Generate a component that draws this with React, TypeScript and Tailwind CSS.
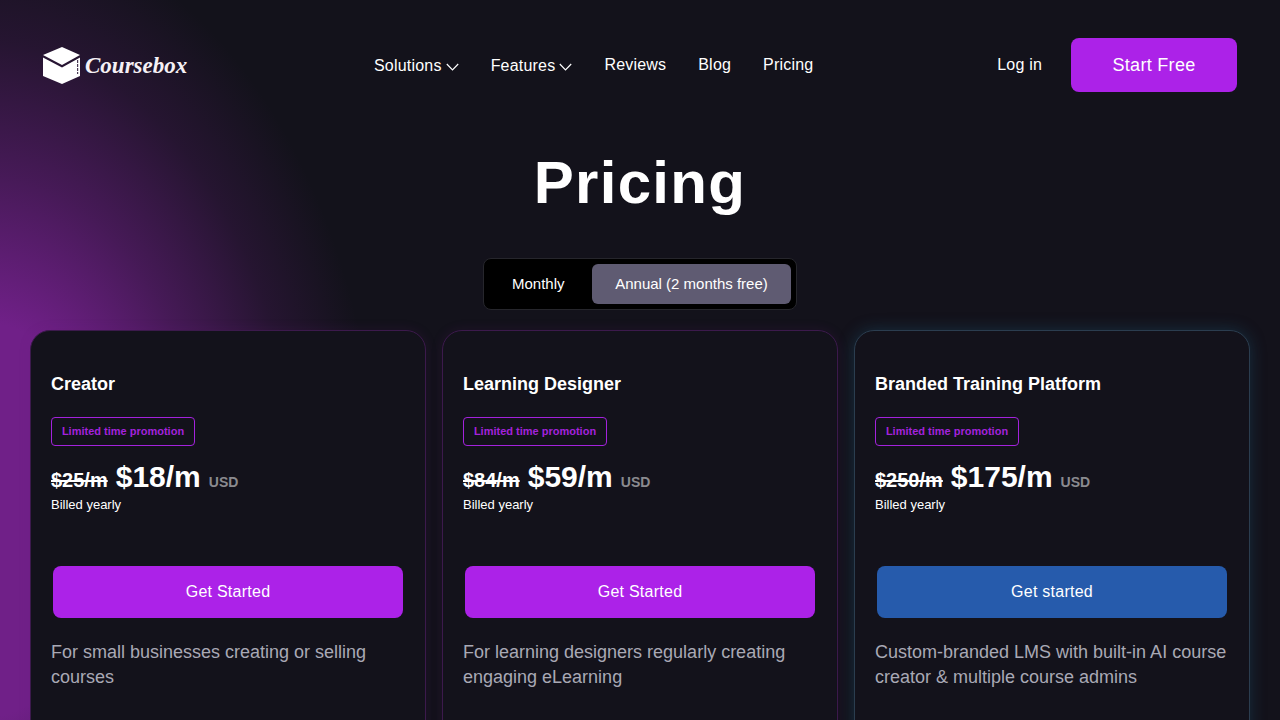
function Chevron() {
  return (
    <svg width="13" height="8" viewBox="0 0 13 8" fill="none" className="mt-[2px] shrink-0">
      <path d="M0.8 1 L6.5 6.8 L12.2 1" stroke="#fff" strokeWidth="1.2" />
    </svg>
  );
}

function Logo() {
  return (
    <div className="flex w-[146px] items-center">
      <svg width="40" height="39" viewBox="0 0 40 39" className="shrink-0">
        <path d="M20 1 L38 9 L20 19 L1 9 Z" fill="#fff" />
        <path d="M1 11.5 L20 21.5 L38 11.5 V30 L20 38 L1 30 Z" fill="#fff" />
        <path d="M35.6 14 V28" stroke="#4a3a55" strokeWidth="1.2" strokeDasharray="3 1" />
      </svg>
      <span className="ml-[3px] whitespace-nowrap text-[23px] leading-none font-bold italic text-[#f5f0f5] font-['Liberation_Serif',serif]">Coursebox</span>
    </div>
  );
}

function NavItem({ label, caret }: { label: string; caret?: boolean }) {
  return (
    <a className={`flex items-center gap-[4px] text-[16px] tracking-[0.2px] text-white ${caret ? "mt-[1px]" : ""}`}>
      {label}
      {caret && <Chevron />}
    </a>
  );
}

type Plan = {
  name: string;
  old: string;
  price: string;
  cta: string;
  desc: string;
  blue?: boolean;
};

const plans: Plan[] = [
  { name: "Creator", old: "$25/m", price: "$18/m", cta: "Get Started", desc: "For small businesses creating or selling courses" },
  { name: "Learning Designer", old: "$84/m", price: "$59/m", cta: "Get Started", desc: "For learning designers regularly creating engaging eLearning" },
  { name: "Branded Training Platform", old: "$250/m", price: "$175/m", cta: "Get started", desc: "Custom-branded LMS with built-in AI course creator & multiple course admins", blue: true },
];

function Card({ plan }: { plan: Plan }) {
  return (
    <div
      className={`flex-1 h-[420px] rounded-[20px] border bg-[#13121b] px-[20px] pt-[41px] ${
        plan.blue
          ? "border-[#2b3d4f] shadow-[0_0_16px_rgba(30,90,120,0.4)]"
          : "border-[#3c1a4c] shadow-[0_0_12px_rgba(110,30,130,0.15)]"
      }`}
    >
      <h3 className="text-[18px] leading-[24px] font-bold text-white">{plan.name}</h3>
      <div className="mt-[21px] flex">
        <span className="flex h-[29px] w-[144px] items-center justify-center rounded-[4px] border border-[#a322dc] text-[11px] font-bold text-[#a322dc]">
          Limited time promotion
        </span>
      </div>
      <div className="mt-[8px] flex h-[38px] items-baseline whitespace-nowrap font-bold text-white">
        <span className="text-[20px] line-through">{plan.old}</span>
        <span className="ml-[8px] text-[30px]">{plan.price}</span>
        <span className="ml-[8px] text-[14px] text-[#8a8a8f]">USD</span>
      </div>
      <p className="mt-[5px] text-[13px] leading-[16px] text-white">Billed yearly</p>
      <button
        className={`mx-[2px] mt-[53px] flex h-[52px] w-[350px] items-center justify-center rounded-[8px] text-[16px] tracking-[0.25px] text-white ${
          plan.blue ? "bg-[#265bac]" : "bg-[#ac22e8]"
        }`}
      >
        {plan.cta}
      </button>
      <p className="mt-[22px] text-[18px] leading-[25px] text-[#a9a9b5]">{plan.desc}</p>
    </div>
  );
}

export default function App() {
  return (
    <div className="relative h-[720px] w-[1280px] overflow-hidden bg-[#13121b] font-['Liberation_Sans',Arial,sans-serif]">
      <div className="pointer-events-none absolute inset-0 bg-[radial-gradient(ellipse_400px_600px_at_-20px_520px,#702088_0%,#702088_33%,rgba(112,32,136,0.55)_58%,rgba(112,32,136,0.2)_80%,rgba(19,18,27,0)_100%)]" />
      <div className="relative flex flex-col">
        <header className="flex h-[130px] items-center pl-[42px] pr-[43px]">
          <Logo />
          <nav className="ml-[186px] flex items-center gap-[32px]">
            <NavItem label="Solutions" caret />
            <NavItem label="Features" caret />
            <NavItem label="Reviews" />
            <NavItem label="Blog" />
            <NavItem label="Pricing" />
          </nav>
          <div className="ml-auto flex items-center gap-[29px]">
            <a className="text-[16px] tracking-[0.2px] text-white">Log in</a>
            <button className="h-[54px] w-[166px] rounded-[8px] bg-[#ac22e8] text-[18px] tracking-[0.3px] text-white">Start Free</button>
          </div>
        </header>
        <h1 className="mt-[16px] text-center text-[60px] leading-[74px] font-bold tracking-[1.3px] text-white">Pricing</h1>
        <div className="mt-[38px] flex justify-center">
          <div className="flex h-[52px] w-[314px] items-center justify-between rounded-[8px] border border-[#26262c] bg-black pl-[28px] pr-[5px]">
            <span className="text-[15px] text-white">Monthly</span>
            <span className="flex h-[40px] w-[199px] items-center justify-center rounded-[6px] bg-[#5f5b72] text-[15px] text-white">Annual (2 months free)</span>
          </div>
        </div>
        <div className="mt-[20px] flex gap-[16px] px-[30px]">
          {plans.map((p) => (
            <Card key={p.name} plan={p} />
          ))}
        </div>
      </div>
    </div>
  );
}
